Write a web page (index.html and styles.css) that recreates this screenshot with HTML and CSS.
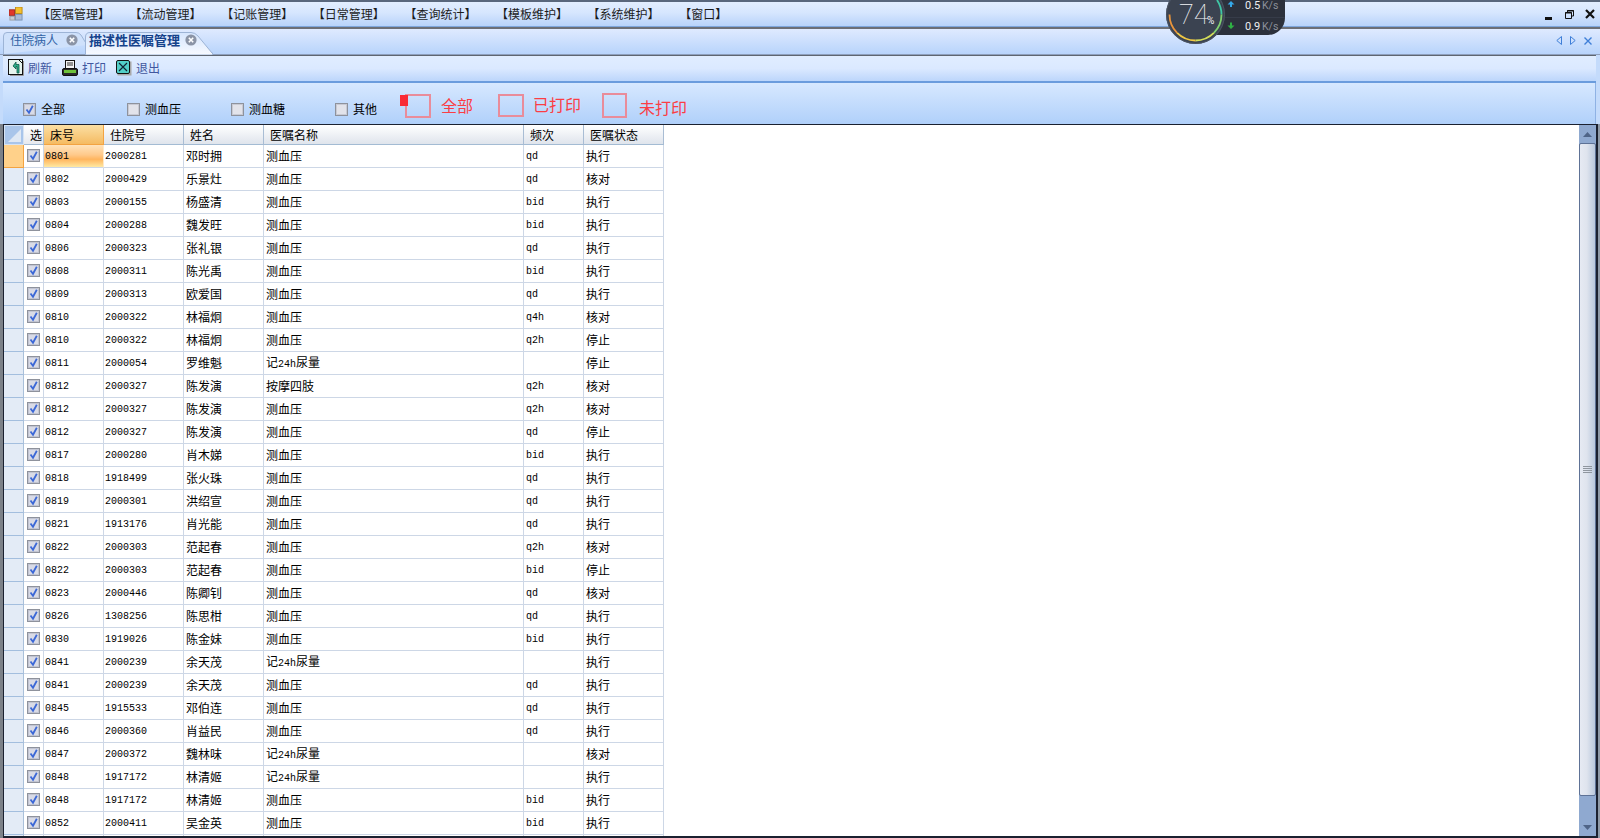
FILE: index.html
```html
<!DOCTYPE html>
<html lang="zh-CN">
<head>
<meta charset="utf-8">
<title>描述性医嘱管理</title>
<link rel="stylesheet" href="styles.css">
</head>
<body>
<svg class="defs" width="0" height="0" aria-hidden="true">
  <symbol id="ck" viewBox="0 0 13 13">
    <rect x="0.5" y="0.5" width="12" height="12" fill="#f2f2f6" stroke="#8e929c"/>
    <rect x="1.5" y="1.5" width="10" height="10" fill="#d9dbe6" stroke="#c2c5d2"/>
    <path d="M3.500 6.500 L6 9.800 L9.800 2.800" fill="none" stroke="#3c68d6" stroke-width="1.8"/>
  </symbol>
  <symbol id="unck" viewBox="0 0 13 13">
    <rect x="0.5" y="0.5" width="12" height="12" fill="#f2f2f6" stroke="#8e929c"/>
    <rect x="1.5" y="1.5" width="10" height="10" fill="#e2e3ea" stroke="#c8cad4"/>
  </symbol>
  <symbol id="closec" viewBox="0 0 12 12">
    <circle cx="6" cy="6" r="5.6" fill="#8b94a6"/>
    <path d="M3.8 3.8 L8.2 8.2 M8.2 3.8 L3.8 8.2" stroke="#fff" stroke-width="1.6"/>
  </symbol>
</svg>

<div class="window">
  <header class="titlebar">
    <svg class="appicon" width="14" height="14" viewBox="0 0 15 15">
      <rect x="7" y="0" width="7" height="7" fill="#f5c02c" stroke="#b98a1a"/>
      <rect x="0" y="3" width="6" height="6" fill="#e2382b" stroke="#a02a20"/>
      <rect x="7" y="8" width="7" height="6" fill="#a9bbd6" stroke="#7d94b5"/>
      <rect x="1" y="10" width="5" height="4" fill="#c9ccd2" stroke="#9a9da3"/>
    </svg>
    <nav class="menu">
      <span class="menuitem">【医嘱管理】</span>
      <span class="menuitem">【流动管理】</span>
      <span class="menuitem">【记账管理】</span>
      <span class="menuitem">【日常管理】</span>
      <span class="menuitem">【查询统计】</span>
      <span class="menuitem">【模板维护】</span>
      <span class="menuitem">【系统维护】</span>
      <span class="menuitem">【窗口】</span>
    </nav>
    <div class="winctrls">
      <svg class="wc-min" width="7" height="3" viewBox="0 0 7 3"><rect width="7" height="3" fill="#111"/></svg>
      <svg width="9" height="9" viewBox="0 0 9 9"><path d="M2.500 2.500 V0.500 H8.500 V6 H6.500 M0.500 2.500 H6.500 V8.500 H0.500 Z" fill="none" stroke="#111"/><path d="M2 1 H9 M0 3 H7" stroke="#111"/></svg>
      <svg class="wc-close" width="10" height="10" viewBox="0 0 10 10"><path d="M1 1 L9 9 M9 1 L1 9" stroke="#111" stroke-width="2.2"/></svg>
    </div>
  </header>

  <div class="tabstrip">
    <div class="tab tab-off">
      <svg class="tabshape" width="84" height="23" viewBox="0 0 84 23"><path d="M0.500 23 V5 Q0.500 1.500 4 1.500 H73 Q76 1.500 78 4 L84 14" fill="#cfe1fb" stroke="#9db4d6"/></svg>
      <span class="tabtext">住院病人</span>
      <svg class="tabclose" width="12" height="12"><use href="#closec"/></svg>
    </div>
    <div class="tab tab-on">
      <svg class="tabshape" width="128" height="24" viewBox="0 0 128 24"><defs><linearGradient id="tabgrad" x1="0" y1="0" x2="0" y2="1"><stop offset="0" stop-color="#d5e5fd"/><stop offset="1" stop-color="#f7faff"/></linearGradient></defs><path d="M0.500 24 V6 Q0.500 1.500 5 1.500 H106 Q110 1.500 113 5 L127 22 H127.500 V24 Z" fill="url(#tabgrad)" stroke="#9db4d6"/></svg>
      <span class="tabtext">描述性医嘱管理</span>
      <svg class="tabclose" width="12" height="12"><use href="#closec"/></svg>
    </div>
    <div class="tabnav">
      <svg width="6" height="9" viewBox="0 0 6 9"><path d="M5.500 0.500 V8.500 L0.800 4.500 Z" fill="none" stroke="#3f7fd8"/></svg>
      <svg width="6" height="9" viewBox="0 0 6 9"><path d="M0.500 0.500 V8.500 L5.200 4.500 Z" fill="none" stroke="#3f7fd8"/></svg>
      <svg width="8" height="8" viewBox="0 0 8 8"><path d="M0.500 0.500 L7.500 7.500 M7.500 0.500 L0.500 7.500" stroke="#3f7fd8" stroke-width="1.4"/></svg>
    </div>
  </div>

  <div class="toolbar">
    <span class="tool">
      <svg width="16" height="17" viewBox="0 0 16 17"><rect x="0.5" y="0.5" width="14" height="15" fill="#e6f4ee" stroke="#111"/><path d="M10 0 L15 5" stroke="#111"/><path d="M5 7 L8 3 L8 5.500 H11 V14 H9 V7.500 H8 V10 Z" fill="#2eae88" stroke="#0d5a48" stroke-width="0.8"/><path d="M15.500 2 V16.500 H2" fill="none" stroke="#9a9a9a"/></svg>
      <span class="toollabel">刷新</span>
    </span>
    <span class="tool">
      <svg width="16" height="16" viewBox="0 0 16 16"><rect x="3.5" y="0.5" width="9" height="8" fill="#f4f4f4" stroke="#111"/><path d="M5 3 H11 M5 5 H11" stroke="#333"/><rect x="0.5" y="8.5" width="15" height="7" rx="1.5" fill="#2a2a2a" stroke="#111"/><rect x="2" y="10" width="12" height="3" fill="#6ec23a"/></svg>
      <span class="toollabel">打印</span>
    </span>
    <span class="tool">
      <svg width="16" height="16" viewBox="0 0 16 16"><rect x="1.5" y="1.5" width="14" height="14" fill="#a8a8a8"/><rect x="0.5" y="0.5" width="13" height="13" rx="1.5" fill="#52cfc8" stroke="#111"/><path d="M3 3 L11 11 M11 3 L3 11" stroke="#123" stroke-width="1.1"/></svg>
      <span class="toollabel">退出</span>
    </span>
  </div>

  <div class="filterbar">
    <label class="chk"><svg width="13" height="13"><use href="#ck"/></svg><span>全部</span></label>
    <label class="chk"><svg width="13" height="13"><use href="#unck"/></svg><span>测血压</span></label>
    <label class="chk"><svg width="13" height="13"><use href="#unck"/></svg><span>测血糖</span></label>
    <label class="chk chk-last"><svg width="13" height="13"><use href="#unck"/></svg><span>其他</span></label>
    <div class="legend legend-all"><span class="legendbox"><i class="marker"></i></span><span class="legendtext">全部</span></div>
    <div class="legend legend-done"><span class="legendbox"></span><span class="legendtext">已打印</span></div>
    <div class="legend legend-todo"><span class="legendbox"></span><span class="legendtext">未打印</span></div>
  </div>

  <div class="gridframe">
    <div class="grid">
      <div class="gridbody">
        <table class="orders">
          <colgroup><col class="c-rh"><col class="c-sel"><col class="c-bed"><col class="c-hosp"><col class="c-name"><col class="c-order"><col class="c-freq"><col class="c-state"></colgroup>
          <thead>
            <tr><th class="corner"><svg width="15" height="15" viewBox="0 0 15 15"><path d="M14 1 V14 H1 Z" fill="#dfe8f4"/></svg></th><th class="th-sel">选</th><th class="th-active">床号</th><th>住院号</th><th>姓名</th><th>医嘱名称</th><th>频次</th><th>医嘱状态</th></tr>
          </thead>
          <tbody>
            <tr class="current"><td class="rh"></td><td class="sel"><svg width="13" height="13"><use href="#ck"/></svg></td><td class="num activecell">0801</td><td class="num">2000281</td><td>邓时拥</td><td>测血压</td><td class="num freq">qd</td><td>执行</td></tr>
            <tr><td class="rh"></td><td class="sel"><svg width="13" height="13"><use href="#ck"/></svg></td><td class="num">0802</td><td class="num">2000429</td><td>乐景灶</td><td>测血压</td><td class="num freq">qd</td><td>核对</td></tr>
            <tr><td class="rh"></td><td class="sel"><svg width="13" height="13"><use href="#ck"/></svg></td><td class="num">0803</td><td class="num">2000155</td><td>杨盛清</td><td>测血压</td><td class="num freq">bid</td><td>执行</td></tr>
            <tr><td class="rh"></td><td class="sel"><svg width="13" height="13"><use href="#ck"/></svg></td><td class="num">0804</td><td class="num">2000288</td><td>魏发旺</td><td>测血压</td><td class="num freq">bid</td><td>执行</td></tr>
            <tr><td class="rh"></td><td class="sel"><svg width="13" height="13"><use href="#ck"/></svg></td><td class="num">0806</td><td class="num">2000323</td><td>张礼银</td><td>测血压</td><td class="num freq">qd</td><td>执行</td></tr>
            <tr><td class="rh"></td><td class="sel"><svg width="13" height="13"><use href="#ck"/></svg></td><td class="num">0808</td><td class="num">2000311</td><td>陈光禹</td><td>测血压</td><td class="num freq">bid</td><td>执行</td></tr>
            <tr><td class="rh"></td><td class="sel"><svg width="13" height="13"><use href="#ck"/></svg></td><td class="num">0809</td><td class="num">2000313</td><td>欧爱国</td><td>测血压</td><td class="num freq">qd</td><td>执行</td></tr>
            <tr><td class="rh"></td><td class="sel"><svg width="13" height="13"><use href="#ck"/></svg></td><td class="num">0810</td><td class="num">2000322</td><td>林福炯</td><td>测血压</td><td class="num freq">q4h</td><td>核对</td></tr>
            <tr><td class="rh"></td><td class="sel"><svg width="13" height="13"><use href="#ck"/></svg></td><td class="num">0810</td><td class="num">2000322</td><td>林福炯</td><td>测血压</td><td class="num freq">q2h</td><td>停止</td></tr>
            <tr><td class="rh"></td><td class="sel"><svg width="13" height="13"><use href="#ck"/></svg></td><td class="num">0811</td><td class="num">2000054</td><td>罗维魁</td><td>记<span class="lat">24h</span>尿量</td><td class="num freq"></td><td>停止</td></tr>
            <tr><td class="rh"></td><td class="sel"><svg width="13" height="13"><use href="#ck"/></svg></td><td class="num">0812</td><td class="num">2000327</td><td>陈发演</td><td>按摩四肢</td><td class="num freq">q2h</td><td>核对</td></tr>
            <tr><td class="rh"></td><td class="sel"><svg width="13" height="13"><use href="#ck"/></svg></td><td class="num">0812</td><td class="num">2000327</td><td>陈发演</td><td>测血压</td><td class="num freq">q2h</td><td>核对</td></tr>
            <tr><td class="rh"></td><td class="sel"><svg width="13" height="13"><use href="#ck"/></svg></td><td class="num">0812</td><td class="num">2000327</td><td>陈发演</td><td>测血压</td><td class="num freq">qd</td><td>停止</td></tr>
            <tr><td class="rh"></td><td class="sel"><svg width="13" height="13"><use href="#ck"/></svg></td><td class="num">0817</td><td class="num">2000280</td><td>肖木娣</td><td>测血压</td><td class="num freq">bid</td><td>执行</td></tr>
            <tr><td class="rh"></td><td class="sel"><svg width="13" height="13"><use href="#ck"/></svg></td><td class="num">0818</td><td class="num">1918499</td><td>张火珠</td><td>测血压</td><td class="num freq">qd</td><td>执行</td></tr>
            <tr><td class="rh"></td><td class="sel"><svg width="13" height="13"><use href="#ck"/></svg></td><td class="num">0819</td><td class="num">2000301</td><td>洪绍宣</td><td>测血压</td><td class="num freq">qd</td><td>执行</td></tr>
            <tr><td class="rh"></td><td class="sel"><svg width="13" height="13"><use href="#ck"/></svg></td><td class="num">0821</td><td class="num">1913176</td><td>肖光能</td><td>测血压</td><td class="num freq">qd</td><td>执行</td></tr>
            <tr><td class="rh"></td><td class="sel"><svg width="13" height="13"><use href="#ck"/></svg></td><td class="num">0822</td><td class="num">2000303</td><td>范起春</td><td>测血压</td><td class="num freq">q2h</td><td>核对</td></tr>
            <tr><td class="rh"></td><td class="sel"><svg width="13" height="13"><use href="#ck"/></svg></td><td class="num">0822</td><td class="num">2000303</td><td>范起春</td><td>测血压</td><td class="num freq">bid</td><td>停止</td></tr>
            <tr><td class="rh"></td><td class="sel"><svg width="13" height="13"><use href="#ck"/></svg></td><td class="num">0823</td><td class="num">2000446</td><td>陈卿钊</td><td>测血压</td><td class="num freq">qd</td><td>核对</td></tr>
            <tr><td class="rh"></td><td class="sel"><svg width="13" height="13"><use href="#ck"/></svg></td><td class="num">0826</td><td class="num">1308256</td><td>陈思柑</td><td>测血压</td><td class="num freq">qd</td><td>执行</td></tr>
            <tr><td class="rh"></td><td class="sel"><svg width="13" height="13"><use href="#ck"/></svg></td><td class="num">0830</td><td class="num">1919026</td><td>陈金妹</td><td>测血压</td><td class="num freq">bid</td><td>执行</td></tr>
            <tr><td class="rh"></td><td class="sel"><svg width="13" height="13"><use href="#ck"/></svg></td><td class="num">0841</td><td class="num">2000239</td><td>余天茂</td><td>记<span class="lat">24h</span>尿量</td><td class="num freq"></td><td>执行</td></tr>
            <tr><td class="rh"></td><td class="sel"><svg width="13" height="13"><use href="#ck"/></svg></td><td class="num">0841</td><td class="num">2000239</td><td>余天茂</td><td>测血压</td><td class="num freq">qd</td><td>执行</td></tr>
            <tr><td class="rh"></td><td class="sel"><svg width="13" height="13"><use href="#ck"/></svg></td><td class="num">0845</td><td class="num">1915533</td><td>邓伯连</td><td>测血压</td><td class="num freq">qd</td><td>执行</td></tr>
            <tr><td class="rh"></td><td class="sel"><svg width="13" height="13"><use href="#ck"/></svg></td><td class="num">0846</td><td class="num">2000360</td><td>肖益民</td><td>测血压</td><td class="num freq">qd</td><td>执行</td></tr>
            <tr><td class="rh"></td><td class="sel"><svg width="13" height="13"><use href="#ck"/></svg></td><td class="num">0847</td><td class="num">2000372</td><td>魏林味</td><td>记<span class="lat">24h</span>尿量</td><td class="num freq"></td><td>核对</td></tr>
            <tr><td class="rh"></td><td class="sel"><svg width="13" height="13"><use href="#ck"/></svg></td><td class="num">0848</td><td class="num">1917172</td><td>林清姬</td><td>记<span class="lat">24h</span>尿量</td><td class="num freq"></td><td>执行</td></tr>
            <tr><td class="rh"></td><td class="sel"><svg width="13" height="13"><use href="#ck"/></svg></td><td class="num">0848</td><td class="num">1917172</td><td>林清姬</td><td>测血压</td><td class="num freq">bid</td><td>执行</td></tr>
            <tr><td class="rh"></td><td class="sel"><svg width="13" height="13"><use href="#ck"/></svg></td><td class="num">0852</td><td class="num">2000411</td><td>吴金英</td><td>测血压</td><td class="num freq">bid</td><td>执行</td></tr>
            <tr><td class="rh"></td><td class="sel"></td><td></td><td></td><td></td><td></td><td></td><td></td></tr>
          </tbody>
        </table>
      </div>
      <div class="scrollbar">
        <div class="sbtn"><svg width="9" height="5" viewBox="0 0 9 5"><path d="M4.500 0 L9 5 H0 Z" fill="#4f6487"/></svg></div>
        <div class="thumb"><svg width="9" height="7" viewBox="0 0 9 7"><path d="M0 .5 H9 M0 2.500 H9 M0 4.500 H9 M0 6.500 H9" stroke="#8f969f"/></svg></div>
        <div class="track"></div>
        <div class="sbtn"><svg width="9" height="5" viewBox="0 0 9 5"><path d="M0 0 H9 L4.500 5 Z" fill="#4f6487"/></svg></div>
      </div>
    </div>
  </div>

  <svg class="netwidget" width="130" height="46" viewBox="0 0 130 46">
    <rect x="30" y="-20" width="95" height="55" rx="17" fill="#2c313c"/>
    <path d="M65 17.500 H125" stroke="#363c49"/>
    <circle cx="35.5" cy="14.5" r="29.5" fill="#3b4351"/>
    <circle cx="35.5" cy="14.5" r="29" fill="none" stroke="#4c5564"/>
    <g fill="none" stroke-width="1.8">
      <path d="M57 0 A26 26 0 0 1 61.500 14.500" stroke="#3fc7a6"/>
      <path d="M61.500 14.500 A26 26 0 0 1 53.900 32.900" stroke="#80d070"/>
      <path d="M53.900 32.900 A26 26 0 0 1 35.500 40.500" stroke="#d4de58"/>
      <path d="M35.500 40.500 A26 26 0 0 1 17.100 32.900" stroke="#f0c844"/>
      <path d="M17.100 32.900 A26 26 0 0 1 9.500 14.500" stroke="#e8943c"/>
    </g>
    <text x="19" y="24" class="w-big">74</text>
    <text x="47" y="24" class="w-pct">%</text>
    <path d="M71 1 L74.500 4.500 H72 V7 H70 V4.500 H67.500 Z" fill="#35a8e8"/>
    <path d="M71 29 L74.500 25.500 H72 V22.500 H70 V25.500 H67.500 Z" fill="#2fb044"/>
    <text x="85" y="9" class="w-val">0.5</text><text x="102" y="9" class="w-unit">K/s</text>
    <text x="85" y="30" class="w-val">0.9</text><text x="102" y="30" class="w-unit">K/s</text>
  </svg>
</div>
</body>
</html>
```
FILE: styles.css
```css
* { box-sizing: border-box; }
html, body { margin: 0; padding: 0; height: 100%; overflow: hidden; }
body { font-family: "Noto Sans CJK SC", "Liberation Sans", sans-serif; font-size: 12px; color: #000; background: #c4dbfb; }
.defs { position: absolute; }
.window { position: relative; width: 1600px; height: 838px; display: flex; flex-direction: column; overflow: hidden; }

/* title bar */
.titlebar { height: 27px; flex: none; display: flex; align-items: center; border-top: 2px solid #59677c; border-bottom: 1px solid #7ea6dc; background: linear-gradient(#e2eeff, #d6e6fe 45%, #b8d3fa); padding-left: 9px; }
.appicon { flex: none; }
.menu { display: flex; gap: 19.6px; margin-left: 15px; }
.menuitem { width: 72px; white-space: nowrap; line-height: 16px; color: #1c1c1c; }
.winctrls { margin-left: auto; display: flex; align-items: center; padding-right: 5px; gap: 13px; }
.wc-min { margin-top: 8px; }
.wc-close { margin-left: -2px; }

/* tabs */
.tabstrip { height: 28px; flex: none; display: flex; align-items: flex-end; position: relative; padding-left: 3px; border-top: 2px solid #6c6f77; border-bottom: 1px solid #8d9fbc; background: linear-gradient(#dfeaff, #b8d4fb); }
.tab { position: relative; height: 23px; display: flex; align-items: center; padding-bottom: 5px; }
.tab-off { width: 82px; padding-left: 7px; }
.tab-on { width: 128px; height: 24px; margin-bottom: -1px; padding-left: 4px; padding-bottom: 6px; }
.tabshape { position: absolute; left: 0; top: 0; }
.tabtext { position: relative; line-height: 16px; white-space: nowrap; }
.tab-off .tabtext { color: #2f62a5; font-size: 12px; }
.tab-on .tabtext { color: #15428b; font-size: 13px; font-weight: 700; }
.tabclose { position: relative; flex: none; }
.tab-off .tabclose { margin-left: 8px; }
.tab-on .tabclose { margin-left: 5px; }
.tabnav { position: absolute; right: 8px; top: 7px; display: flex; align-items: center; gap: 8px; }

/* toolbar */
.toolbar { height: 28px; flex: none; margin-left: 3px; margin-right: 4px; display: flex; align-items: center; padding: 0 0 2px 5px; border-top: 1px solid #5f6670; border-bottom: 2px solid #6b9cdd; background: linear-gradient(#e0edff, #dbe9ff 50%, #bcd6fb); }
.tool { display: flex; align-items: center; gap: 4px; margin-right: 10px; }
.toollabel { color: #41579f; line-height: 16px; white-space: nowrap; }

/* filter bar */
.filterbar { height: 41px; flex: none; margin-left: 3px; margin-right: 4px; display: flex; align-items: flex-start; padding-left: 20px; border-right: 1px solid #8fb2e4; background: linear-gradient(#d7e8ff, #b0d0fa); }
.chk { width: 104px; flex: none; display: flex; align-items: center; gap: 5px; margin-top: 19px; line-height: 14px; white-space: nowrap; }
.chk-last { width: 52px; }
.legend { display: flex; flex: none; position: relative; color: #fb3d44; font-size: 16px; line-height: 18px; }
.legendbox { position: relative; display: block; border: 2px solid #e98c9a; flex: none; }
.legendtext { white-space: nowrap; }
.legend-all { margin-left: 18px; margin-top: 11px; }
.legend-all .legendbox { width: 26px; height: 24px; }
.legend-all .legendtext { margin-left: 10px; margin-top: 2px; }
.legend-done { margin-left: 25px; margin-top: 11px; }
.legend-done .legendbox { width: 26px; height: 23px; }
.legend-done .legendtext { margin-left: 9px; margin-top: 1px; }
.legend-todo { margin-left: 21px; margin-top: 10px; }
.legend-todo .legendbox { width: 25px; height: 25px; }
.legend-todo .legendtext { margin-left: 12px; margin-top: 5px; }
.marker { position: absolute; left: -7px; top: -1px; width: 8px; height: 11px; background: #f92a35; }

/* grid */
.gridframe { flex: 1; min-height: 0; display: flex; border-left: 3px solid #7c8188; border-right: 2px solid #8f9aa8; }
.grid { flex: 1; min-width: 0; display: flex; background: #fff; border: solid #1b2130; border-width: 1px 2px 2px 1px; }
.gridbody { flex: 1; min-width: 0; overflow: hidden; }
.orders { table-layout: fixed; width: 660px; border-collapse: separate; border-spacing: 0; }
.c-rh, .c-sel { width: 20px; }
.c-bed, .c-freq { width: 60px; }
.c-hosp, .c-name, .c-state { width: 80px; }
.c-order { width: 260px; }
.orders th { height: 20px; padding: 0 0 0 6px; font-weight: 400; text-align: left; line-height: 14px; white-space: nowrap; background: linear-gradient(#fff, #dfe4ec); border-right: 1px solid #a9bdd4; border-bottom: 1px solid #a3bbd3; }
.orders th.corner { padding: 0; background: #a9c5ea; border: 1px solid #d6e3f3; vertical-align: middle; text-align: center; line-height: 0; }
.orders th.th-sel { background: linear-gradient(#fff, #e6e9ef); }
.orders th.th-active { background: linear-gradient(#fbdfa4, #f5bb62); border-right-color: #f3a341; border-bottom-color: #f3a341; }
.orders td { height: 23px; padding: 0 2px; line-height: 14px; white-space: nowrap; overflow: hidden; border-right: 1px solid #cdd7e6; border-bottom: 1px solid #cdd7e6; }
.orders td.rh { padding: 0; background: #e3ebf6; border-right-color: #a9c0da; border-bottom-color: #a3bede; }
.orders td.sel { padding: 0 0 1px 3px; line-height: 0; }
.orders td.sel svg { display: block; }
.orders td.num { padding-top: 2px; padding-left: 1px; }
.orders td.freq { padding-left: 2px; }
.current td.rh { background: #ffd18a; border-color: #f3a341; }
.orders td.activecell { background: linear-gradient(#ffe3bb, #ffc98a 45%, #ffb55e 65%, #ffe9a2); border-right-color: #ffe9c8; }
.num, .lat { font-family: "Liberation Mono", "DejaVu Sans Mono", monospace; font-size: 10px; }

/* scrollbar */
.scrollbar { width: 17px; flex: none; display: flex; flex-direction: column; background: #8fa9d0; }
.sbtn { height: 18px; flex: none; display: flex; align-items: center; justify-content: center; }
.thumb { height: 653px; flex: none; display: flex; align-items: center; justify-content: center; border: 1px solid #5e7296; border-radius: 2px; background: linear-gradient(90deg, #e6eaf3, #dfe4ee 45%, #b9c8dd); }
.track { flex: 1; }

/* floating net monitor */
.netwidget { position: absolute; left: 1160px; top: 0; overflow: visible; }
.w-big { font-family: Roboto, sans-serif; font-weight: 100; font-size: 27px; fill: #f2f4f6; }
.w-pct { font-family: Roboto, sans-serif; font-size: 10px; fill: #f2f4f6; }
.w-val { font-family: Roboto, sans-serif; font-size: 11px; fill: #eceef0; }
.w-unit { font-family: Roboto, sans-serif; font-size: 10.5px; fill: #8b909a; }
```
